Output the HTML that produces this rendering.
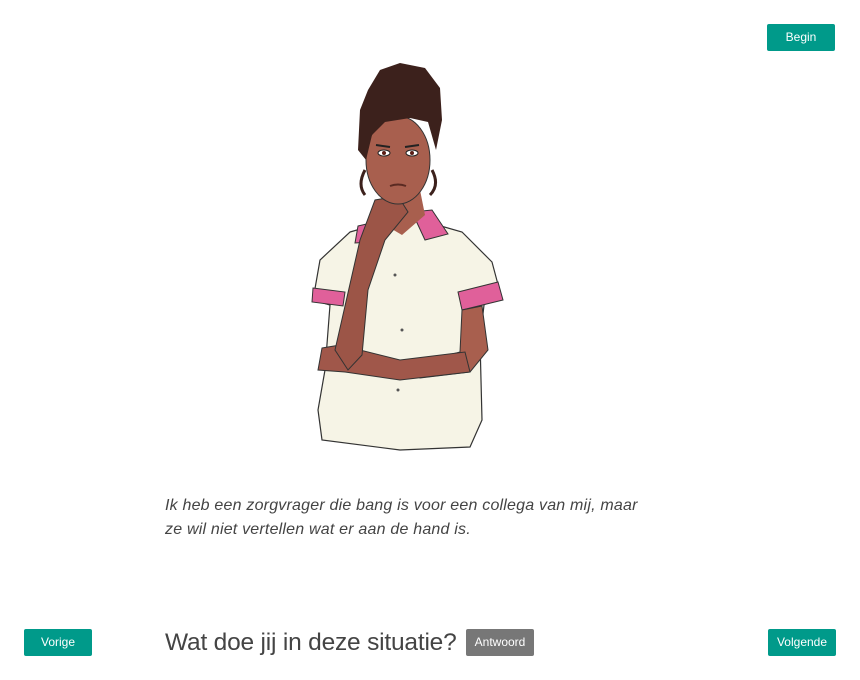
<!DOCTYPE html>
<html><head><meta charset="utf-8"><style>
body{margin:0;width:860px;height:680px;background:#fff;position:relative;overflow:hidden;font-family:"Liberation Sans",sans-serif}
.btn{position:absolute;height:27px;width:68px;background:#009a8a;color:#fff;font-size:12px;line-height:27px;text-align:center;border-radius:2px}
.txt{position:absolute;left:165px;top:494px;font-style:italic;font-size:16px;line-height:24px;color:#444;letter-spacing:0.2px}
.h{position:absolute;left:165px;top:628px;font-size:24.5px;color:#444;line-height:30px;letter-spacing:-0.2px}
</style></head><body>
<div class="btn" style="left:767px;top:24px">Begin</div>
<svg style="position:absolute;left:0;top:0" width="860" height="680" viewBox="0 0 860 680">
<path d="M350 232 L385 222 L420 220 L462 232 L492 262 L500 292 L484 305 L480 340 L482 420 L470 447 L400 450 L322 440 L318 410 L325 370 L330 305 L313 300 L320 260 Z" fill="#f6f4e6" stroke="#333" stroke-width="1.2"/>
<path d="M313 288 L345 292 L343 306 L312 302 Z" fill="#e0609a" stroke="#333" stroke-width="1"/>
<path d="M458 292 L498 282 L503 300 L462 310 Z" fill="#e0609a" stroke="#333" stroke-width="1"/>
<path d="M358 226 L375 222 L372 242 L355 243 Z" fill="#e0609a" stroke="#333" stroke-width="1"/>
<path d="M412 212 L432 210 L448 234 L425 240 Z" fill="#e0609a" stroke="#333" stroke-width="1"/>
<path d="M385 192 L420 190 L425 215 L402 235 L380 222 Z" fill="#a85f4e"/>
<path d="M462 310 L482 306 L488 350 L470 372 L420 378 L400 368 L460 352 Z" fill="#a85f4e" stroke="#333" stroke-width="1"/>
<path d="M322 348 L340 345 L400 360 L465 352 L470 372 L400 380 L345 372 L318 370 Z" fill="#a0574a" stroke="#333" stroke-width="1"/>
<path d="M345 306 L335 350 L348 370 L362 355 L368 290 L385 240 L408 212 L398 196 L375 200 L360 240 Z" fill="#9c5547" stroke="#333" stroke-width="1"/>
<ellipse cx="398" cy="160" rx="32" ry="44" fill="#a85f4e" stroke="#333" stroke-width="1"/>
<path d="M358 150 L360 110 L368 90 L380 70 L400 63 L425 68 L440 88 L442 120 L436 150 L428 122 L410 118 L385 122 L372 135 L366 160 Z" fill="#3c211c"/>
<path d="M365 170 q-8 15 0 25 M432 170 q8 15 -2 25" stroke="#3c211c" stroke-width="3" fill="none"/>
<ellipse cx="384" cy="153" rx="6" ry="3" fill="#fff" stroke="#222"/>
<ellipse cx="412" cy="153" rx="6" ry="3" fill="#fff" stroke="#222"/>
<circle cx="384" cy="153" r="2" fill="#5a1e16"/><circle cx="412" cy="153" r="2" fill="#5a1e16"/>
<path d="M376 145 l14 2 M405 147 l14 -2" stroke="#222" stroke-width="2"/>
<path d="M390 186 q8 -3 16 0" stroke="#5a2a22" stroke-width="2" fill="none"/>
<circle cx="395" cy="275" r="1.5" fill="#555"/><circle cx="402" cy="330" r="1.5" fill="#555"/><circle cx="398" cy="390" r="1.5" fill="#555"/>
</svg>
<div class="txt">Ik heb een zorgvrager die bang is voor een collega van mij, maar<br>ze wil niet vertellen wat er aan de hand is.</div>
<div class="btn" style="left:24px;top:629px">Vorige</div>
<div class="h">Wat doe jij in deze situatie?</div>
<div class="btn" style="left:466px;top:629px;background:#777">Antwoord</div>
<div class="btn" style="left:768px;top:629px">Volgende</div>
</body></html>
